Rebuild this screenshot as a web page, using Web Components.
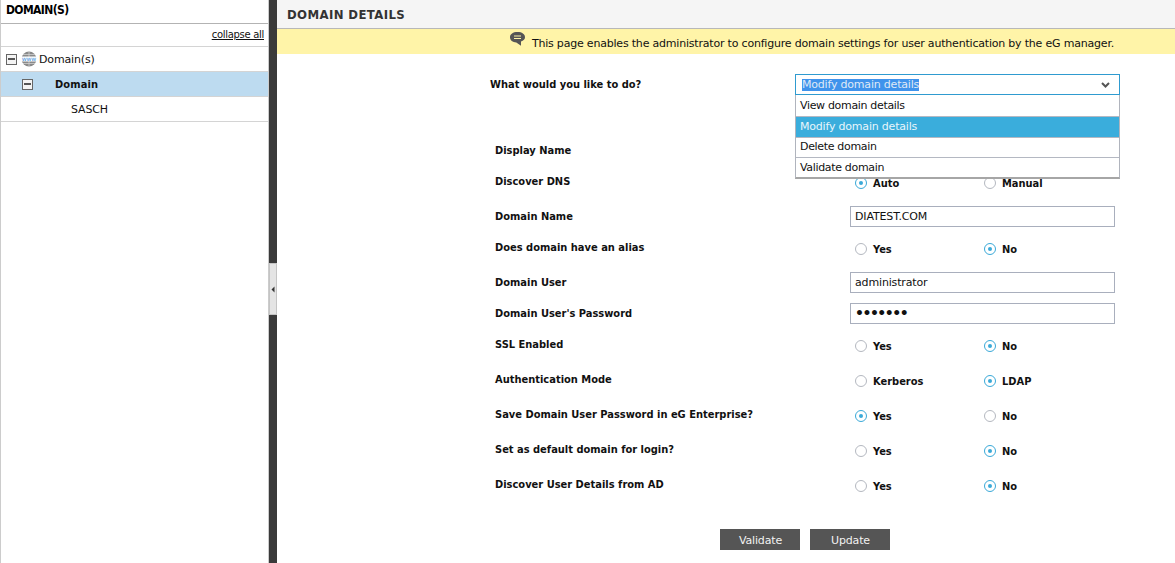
<!DOCTYPE html>
<html>
<head>
<meta charset="utf-8">
<title>Domain details</title>
<style>
html,body{margin:0;height:100%;overflow:hidden;background:#fff;}
body{font-family:"DejaVu Sans",Verdana,sans-serif;font-size:11px;color:#111;letter-spacing:-.15px;
  --bold-font:"DejaVu Sans Condensed","DejaVu Sans",sans-serif;}
</style>
</head>
<body>
<domain-page></domain-page>

<script>
class DomainTree extends HTMLElement{
  constructor(){
    super();
    this.attachShadow({mode:'open'});
    this.shadowRoot.innerHTML=`
<style>
:host{display:block;width:269px;flex:none;box-sizing:border-box;border-left:1px solid #ccc;border-right:1px solid #ccc;}
.head{height:23px;border-bottom:1px solid #b3b3b3;font:bold 12px/20px var(--bold-font);letter-spacing:-.6px;padding-left:5px;color:#000;}
.tools{height:22px;line-height:22px;text-align:right;padding-right:4px;border-bottom:1px solid #d4d4d4;font-size:10px;letter-spacing:-.3px;}
.tools a{color:#111;text-decoration:underline;}
.row{display:flex;align-items:center;height:24px;border-bottom:1px solid #d4d4d4;}
.row.sel{background:#bddbf0;font:bold 11px var(--bold-font);letter-spacing:.1px;}
.box{width:9px;height:9px;border:1px solid #666;background:#f4f4f4;display:flex;align-items:center;justify-content:center;flex:none;}
.box::after{content:"";width:7px;height:2px;background:#555;}
svg{display:block;flex:none;}
</style>
<div class="head">DOMAIN(S)</div>
<div class="tools"><a>collapse all</a></div>
<div class="row"><span class="box" style="margin-left:5px"></span>
<svg width="16" height="16" viewBox="0 0 16 16" style="margin:0 2px 0 4px">
  <circle cx="8" cy="8" r="7.5" fill="#8a8a8a"/>
  <path d="M.5 8h15M8 .5v15M2 3.5h12M2 12.5h12" stroke="#d8d8d8" stroke-width=".7" fill="none"/>
  <rect x="0" y="5.500" width="16" height="5" fill="#fff"/>
  <text x="8" y="10" font-size="6" text-anchor="middle" fill="#3f8fdc" font-family="'DejaVu Sans',sans-serif">www</text>
</svg>
<span>Domain(s)</span></div>
<div class="row sel"><span class="box" style="margin-left:21px"></span><span style="margin-left:22px">Domain</span></div>
<div class="row"><span style="margin-left:70px">SASCH</span></div>
`;
  }
}
customElements.define('domain-tree',DomainTree);

class SplitBar extends HTMLElement{
  constructor(){
    super();
    this.attachShadow({mode:'open'});
    this.shadowRoot.innerHTML=`
<style>
:host{display:flex;flex-direction:column;justify-content:center;width:8px;flex:none;background:#3a3a3a;height:563px;}
.grip{height:50px;background:#e4e4e4;border:1px solid #c4c4c4;width:6px;display:flex;align-items:center;justify-content:center;margin-top:15px;}
svg{display:block;}
</style>
<div class="grip"><svg width="4" height="7" viewBox="0 0 4 7"><path d="M3.500 0.500v6L0.500 3.500z" fill="#333"/></svg></div>
`;
  }
}
customElements.define('split-bar',SplitBar);

class FormRow extends HTMLElement{
  constructor(){
    super();
    this.attachShadow({mode:'open'});
    this.shadowRoot.innerHTML=`
<style>
:host{display:grid;grid-template-columns:355px 265px;}
.lab{font:bold 11px/13px var(--bold-font);letter-spacing:0;padding-top:4px;color:#111;}
</style>
<div class="lab"></div>
<div><slot></slot></div>
`;
  }
  connectedCallback(){
    this.shadowRoot.querySelector('.lab').textContent=this.getAttribute('label');
  }
}
customElements.define('form-row',FormRow);

class RadioPair extends HTMLElement{
  constructor(){
    super();
    this.attachShadow({mode:'open'});
  }
  connectedCallback(){
    const a=this.getAttribute('a'),b=this.getAttribute('b'),on=this.getAttribute('on');
    const item=(t,w)=>`<span class="it" style="width:${w}px"><span class="r ${on===t?'on':''}"></span><span>${t}</span></span>`;
    this.shadowRoot.innerHTML=`
<style>
:host{display:flex;height:35px;padding:6px 0 0 5px;box-sizing:border-box;font:bold 11px/13px var(--bold-font);letter-spacing:0;}
.it{display:flex;align-items:flex-start;gap:6px;height:13px;}
.r{width:10px;height:10px;border:1px solid #b4b8c0;border-radius:50%;background:#fff;display:flex;align-items:center;justify-content:center;flex:none;}
.r.on{border-color:#3aa9d8;}
.r.on::after{content:"";width:4px;height:4px;border-radius:50%;background:#3aa9d8;}
</style>
${item(a,129)}${item(b,100)}`;
  }
}
customElements.define('radio-pair',RadioPair);

class TextBox extends HTMLElement{
  constructor(){
    super();
    this.attachShadow({mode:'open'});
    this.shadowRoot.innerHTML=`
<style>
:host{display:block;height:31px;}
.f{box-sizing:border-box;height:21px;line-height:19px;border:1px solid #a9afbd;padding:0 4px;color:#111;white-space:nowrap;overflow:hidden;}
</style>
<div class="f"><slot></slot></div>
`;
  }
}
customElements.define('text-box',TextBox);

class ActionSelect extends HTMLElement{
  constructor(){
    super();
    this.attachShadow({mode:'open'});
    this.shadowRoot.innerHTML=`
<style>
:host{display:block;position:relative;width:325px;height:21px;}
.cur{box-sizing:border-box;height:21px;border:1px solid #2f9bd0;padding:0 6px;line-height:19px;display:flex;justify-content:space-between;align-items:center;background:#fff;}
.cur span{background:#3f93ec;color:#dfe9f6;line-height:12px;letter-spacing:-.2px;}
.list{position:absolute;left:0;top:21px;width:325px;box-sizing:border-box;background:#fff;border:1px solid #b0b4bd;border-bottom:2px solid #a6a6a6;border-top:0;z-index:2;letter-spacing:-.33px;}
.o{height:19px;line-height:19px;padding-left:4px;border-bottom:1px solid #b4b8c2;}
.o:first-child{height:21px;line-height:22px;}
.o:nth-child(3){line-height:17px;}
.o:last-child{border-bottom:0;}
.o.on{background:#3aaddc;color:#e8f5fb;height:20px;line-height:20px;letter-spacing:-.2px;}
svg{display:block;}
</style>
<div class="cur"><span>Modify domain details</span>
<svg width="9" height="6" viewBox="0 0 9 6" style="margin-right:3px"><path d="M1 1l3.500 3.500L8 1" fill="none" stroke="#555" stroke-width="2"/></svg></div>
<div class="list">
<div class="o">View domain details</div>
<div class="o on">Modify domain details</div>
<div class="o">Delete domain</div>
<div class="o">Validate domain</div>
</div>
`;
  }
}
customElements.define('action-select',ActionSelect);

class DomainPage extends HTMLElement{
  constructor(){
    super();
    this.attachShadow({mode:'open'});
    this.shadowRoot.innerHTML=`
<style>
:host{display:flex;height:563px;overflow:hidden;}
main{flex:1;min-width:0;}
.title{height:28px;background:#f5f5f5;border-bottom:1px solid #b8b8b8;padding-left:10px;font:bold 13px/30px var(--bold-font);letter-spacing:.4px;color:#333;}
.note{height:25px;background:#fff4a8;display:flex;justify-content:flex-end;gap:6px;padding-right:61px;box-sizing:border-box;color:#111;letter-spacing:-.2px;}
.note span{padding-top:8px;}
.note svg{margin-top:2px;}
form{display:block;width:620px;margin-left:218px;}
.top{display:grid;grid-template-columns:305px 325px;margin:20px 0 45px -5px;width:630px;}
.top b{padding-top:4px;color:#111;font:bold 11px/13px var(--bold-font);letter-spacing:0;}
.btns{display:flex;justify-content:center;gap:10px;margin-top:20px;}
.btn{width:80px;height:21px;line-height:23px;padding-left:1px;box-sizing:border-box;text-align:center;background:#555;color:#f2f2f2;}
svg{display:block;}
</style>
<domain-tree></domain-tree>
<split-bar></split-bar>
<main>
  <div class="title">DOMAIN DETAILS</div>
  <div class="note">
    <svg width="17" height="17" viewBox="0 0 17 17"><path d="M8.500 1C4 1 1 3 1 6.300c0 3 2.700 5 6.300 5.200l4.700 3.300v-4.200c2.500-.9 4-2.300 4-4.300C16 3 13 1 8.500 1z" fill="#555"/><path d="M5 5h7M5 7.500h7" stroke="#fff4a8" stroke-width="1"/></svg>
    <span>This page enables the administrator to configure domain settings for user authentication by the eG manager.</span>
  </div>
  <form>
    <div class="top"><b>What would you like to do?</b><action-select></action-select></div>
    <form-row label="Display Name"><text-box></text-box></form-row>
    <form-row label="Discover DNS"><radio-pair a="Auto" b="Manual" on="Auto"></radio-pair></form-row>
    <form-row label="Domain Name"><text-box>DIATEST.COM</text-box></form-row>
    <form-row label="Does domain have an alias"><radio-pair a="Yes" b="No" on="No"></radio-pair></form-row>
    <form-row label="Domain User"><text-box>administrator</text-box></form-row>
    <form-row label="Domain User's Password"><text-box><span style="font-size:14px;letter-spacing:-1.5px;font-weight:bold">•••••••</span></text-box></form-row>
    <form-row label="SSL Enabled"><radio-pair a="Yes" b="No" on="No"></radio-pair></form-row>
    <form-row label="Authentication Mode"><radio-pair a="Kerberos" b="LDAP" on="LDAP"></radio-pair></form-row>
    <form-row label="Save Domain User Password in eG Enterprise?"><radio-pair a="Yes" b="No" on="Yes"></radio-pair></form-row>
    <form-row label="Set as default domain for login?"><radio-pair a="Yes" b="No" on="No"></radio-pair></form-row>
    <form-row label="Discover User Details from AD"><radio-pair a="Yes" b="No" on="No"></radio-pair></form-row>
    <div class="btns"><div class="btn">Validate</div><div class="btn">Update</div></div>
  </form>
</main>
`;
  }
}
customElements.define('domain-page',DomainPage);
</script>
</body>
</html>
